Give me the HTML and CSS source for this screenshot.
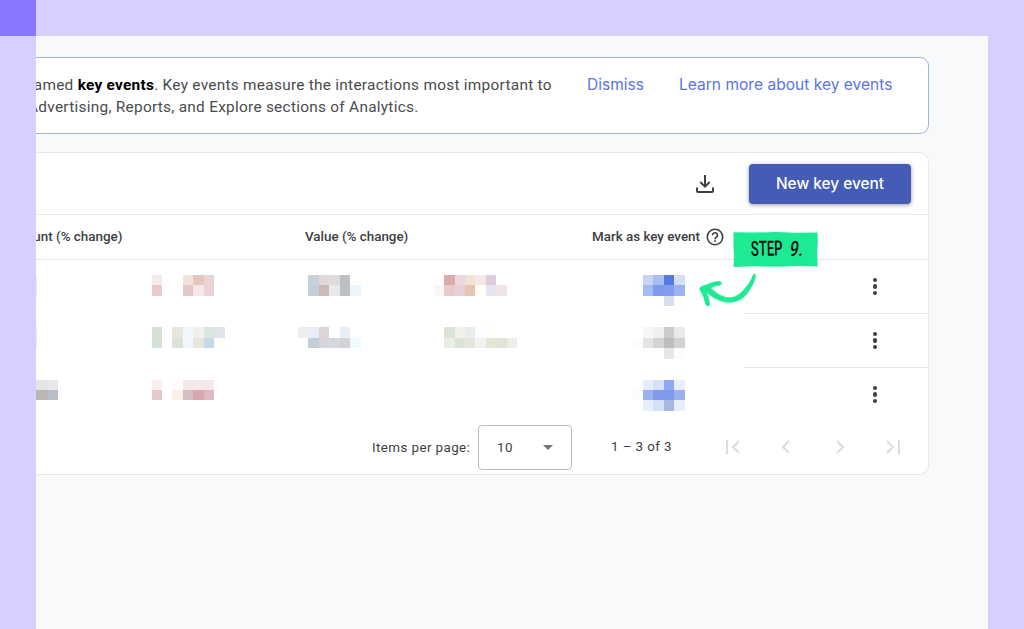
FILE: index.html
```html
<!DOCTYPE html>
<html lang="en">
<head>
  <meta charset="UTF-8" />
  <meta name="viewport" content="width=device-width, initial-scale=1.0" />
  <title>Key events</title>
  <link rel="stylesheet" href="styles.css">
</head>
<body>
  <div class="corner"></div>
  <main class="page">
    <section class="banner">
      <p class="banner-text">
        <span class="line line-one">named <b>key events</b>. Key events measure the interactions most important to</span>
        <span class="line line-two">Advertising, Reports, and Explore sections of Analytics.</span>
      </p>
      <a class="banner-link dismiss">Dismiss</a>
      <a class="banner-link learn">Learn more about key events</a>
    </section>

    <section class="card">
      <div class="toolbar">
        <svg class="download" viewBox="0 0 20 20" fill="none" stroke="#3c4043" stroke-width="2">
          <path d="M10 1v11M5.300 8l4.700 4.700L14.700 8M2 13.500V17q0 1 1 1h14q1 0 1-1v-3.500"/>
        </svg>
        <button class="new-event">New key event</button>
      </div>

      <div class="table-head">
        <span class="head-count">Count (% change)</span>
        <span class="head-value">Value (% change)</span>
        <span class="head-mark">Mark as key event</span>
        <svg class="help" viewBox="0 0 18 18" fill="none" stroke="#3c4043" stroke-width="1.6">
          <circle cx="9" cy="9" r="7.7"/>
          <path d="M6.500 7.300a2.500 2.400 0 1 1 3.900 1.900Q9 10.100 9 11.200"/>
          <path d="M9 12.300v1.700"/>
        </svg>
      </div>

      <div class="table-body">
        <div class="data" id="data"></div>
        <div class="actions">
          <div class="action"><i></i><i></i><i></i></div>
          <div class="action"><i></i><i></i><i></i></div>
          <div class="action"><i></i><i></i><i></i></div>
        </div>
      </div>

      <div class="paginator">
        <span class="per-page">Items per page:</span>
        <div class="select"><span>10</span><i class="caret"></i></div>
        <span class="range">1 – 3 of 3</span>
        <svg class="pager" viewBox="0 0 14 14"><path d="M1 0v14M13 1L7 7l6 6"/></svg>
        <svg class="pager" viewBox="0 0 14 14"><path d="M10 1L4 7l6 6"/></svg>
        <svg class="pager" viewBox="0 0 14 14"><path d="M4 1l6 6-6 6"/></svg>
        <svg class="pager" viewBox="0 0 14 14"><path d="M1 1l6 6-6 6M13 0v14"/></svg>
      </div>
    </section>
  </main>

  <svg class="tag" viewBox="0 0 86 36">
    <path fill="#1eea94" d="M.5 1.200l20 .4 22-.5 20 .6 22-.3.3 9-.6 10 .4 15-19-.3-20 .7-24-.5-21 .600.300-12-.400-10z"/>
  </svg>
  <div class="tag-text"><span class="word">STEP</span><span class="digit">9.</span></div>
  <svg class="arrow" viewBox="0 0 58 34" fill="#1eea94" stroke="#1eea94" stroke-width=".7">
    <path d="M54.500 1.500Q56.300.3 56.500 3.200C55 11 49 21 43.500 25.100C38 29.200 30 30.300 24.500 28.500C16 26.500 11 22 7.500 19L10 27.500Q11.500 32.500 9 33Q7 33.400 6 28.500C5 23 2 19 1 17C0 14 3 13 7 12C13 9.500 17 8 21 8.600Q24 9.700 21 12.100Q16 12.500 11.500 15C17 20 23 24.500 30 24.700C39 25.500 46 16 50.500 9.500Q53 5.500 54.500 1.500z"/>
  </svg>

  <script>
    // each cell: rows of hex colours, '-' leaves a block empty
    const rows = [
      [
        ['eeeeee', 'eeeeee'],
        ['f6ebeb - - f2e4da e6c7bd ebd4d3', 'e8cac8 - - e5c7c9 f5e8e9 e8d3d7'],
        ['- c8d1da e0d8d9 dfdcda bdc1c3 -', '- c3ced8 c9bbb8 e7e9ec bdc1c3 edf5fc'],
        ['- d9aca9 ecd7df f2e2d3 f5e8e8 dccddd -', 'fcf5f5 e9cbca e9cfd6 e6c5b7 fffdf4 e6e3f3 f1e4e8'],
        ['- c7d4f7 a8bef5 5579e5 d5dff8', 'fbfdff a5bbf4 7f9aec 839cec a0b1ef', '- - - d8dcec fdfdfb']
      ],
      [
        ['f0f0f3', 'eeeeee'],
        ['d6e1d6 - e6e7da f0f7fc f0f1ea d8e7e2 dfe6ea', 'd6e1d6 - dce2d8 f0f6fa e5e7dc c5dae7 fffef9'],
        ['ededed e8edf8 dfd5d9 - e8eff4', '- c4ced8 d6d5d9 d4d9e1 d3d3d5 effaff'],
        ['- dae3d5 f1f1ec e9edeb fbfdff fffefa', '- e8ede6 dae4d6 e5e6dc f2f2f3 e4e6d7 e2e4d5 eaefe7'],
        ['- f6f6f6 efefef cccccc e9e9e9', 'fefcfa e4e4e5 d3d3d4 bdbdbf d2d2d2', '- - - e6e6e6 fcfcfc']
      ],
      [
        ['e4e4e6 e9e9e9', 'bdb5b2 b8bec9'],
        ['f9efee - fffdfc f5e8e8 f5e8e9 f5e8e9', 'e5c8ca - fbf0e3 d4bfc5 d5a9ad dfb9c4'],
        [],
        [],
        ['- e5ecfb d5e0fa 8fa7ef e9eefb', 'f9fdff 9bb2f0 809bec 819bec 9dafee', '- e9eefc d7e0fa a9b7e3 e8eefb']
      ]
    ];

    const data = document.getElementById('data');
    rows.forEach((row, r) => {
      row.forEach((lines, c) => {
        const cell = document.createElement('div');
        cell.className = 'cell';
        if (c === 0) cell.classList.add(r < 2 ? 'sliver' : 'cut');
        lines.forEach(line => {
          const strip = document.createElement('div');
          strip.className = 'strip';
          line.split(' ').forEach(color => {
            const block = document.createElement('i');
            if (color !== '-') block.style.background = '#' + color;
            strip.appendChild(block);
          });
          cell.appendChild(strip);
        });
        data.appendChild(cell);
      });
    });
  </script>
</body>
</html>
```

FILE: styles.css
```css
* {
  box-sizing: border-box;
}

body {
  margin: 0;
  height: 629px;
  padding: 36px 36px 0;
  overflow: hidden;
  background: #d6cfff;
  color: #3c4043;
  font-family: Roboto, sans-serif;
}

.corner {
  position: absolute;
  left: 0;
  top: 0;
  width: 36px;
  height: 36px;
  background: #8878ff;
}

.page {
  height: 593px;
  padding-top: 21px;
  padding-right: 59px;
  overflow: hidden;
  background: #f8f9fb;
}

.banner {
  display: flex;
  height: 77px;
  padding-top: 16px;
  background: #fff;
  border: 1px solid #9db2ef;
  border-left: none;
  border-radius: 0 9px 9px 0;
}

.banner-text {
  width: 551px;
  margin: 0;
  overflow: hidden;
  font-size: 15.4px;
  line-height: 22.4px;
  letter-spacing: 0.27px;
  white-space: nowrap;
  color: #4a4b4d;
}

.banner-text b {
  color: #000;
}

.line {
  display: block;
}

.line-one {
  margin-left: -11px;
}

.line-two {
  margin-left: -8px;
}

.banner-link {
  font-family: Inter, sans-serif;
  font-size: 15.5px;
  line-height: 21px;
  letter-spacing: 0.03px;
  white-space: nowrap;
  color: #5b74e3;
}

.dismiss {
  width: 92px;
}

.card {
  margin-top: 18px;
  height: 323px;
  background: #fff;
  border: 1px solid #e6e8eb;
  border-left: none;
  border-radius: 0 10px 10px 0;
}

.toolbar {
  display: flex;
  justify-content: flex-end;
  align-items: center;
  height: 62px;
  padding-right: 17px;
  border-bottom: 1px solid #ebecee;
}

.download {
  width: 20px;
  height: 20px;
  margin-right: 34px;
}

.new-event {
  width: 162px;
  height: 40px;
  padding: 0;
  border: none;
  border-radius: 4px;
  background: #445cb6;
  box-shadow: 0 1px 4px rgba(0, 0, 0, 0.4);
  color: #fff;
  font-family: Inter, sans-serif;
  font-size: 15.4px;
  font-weight: 500;
}

.table-head {
  display: flex;
  align-items: center;
  height: 45px;
  border-bottom: 1px solid #e6e7e9;
  font-size: 13.4px;
  font-weight: 500;
  white-space: nowrap;
}

.table-head span {
  padding-bottom: 2px;
}

.head-count {
  width: 288px;
  margin-left: -19px;
}

.head-value {
  width: 287px;
}

.head-mark {
  width: 113.500px;
}

.help {
  width: 18px;
  height: 18px;
}

.table-body {
  display: flex;
  height: 161px;
}

.data {
  display: grid;
  grid-template-columns: 115.6px 146.3px 135.85px 198.85px 1fr;
  grid-template-rows: repeat(3, 52.25px);
  width: 708px;
  padding-top: 15px;
}

.strip {
  display: flex;
}

.strip i {
  flex: none;
  width: 10.45px;
  height: 10.45px;
}

.sliver {
  width: 1px;
  overflow: hidden;
}

.cut i:first-child {
  width: 11.5px;
}

.actions {
  flex: 1;
}

.action {
  display: flex;
  flex-direction: column;
  align-items: center;
  justify-content: center;
  gap: 2px;
  height: 54px;
  padding-left: 78px;
  border-bottom: 1px solid #e6e7e9;
}

.action:last-child {
  border-bottom-color: transparent;
}

.action i {
  width: 4.6px;
  height: 4.6px;
  border-radius: 50%;
  background: #3c4043;
}

.paginator {
  display: flex;
  align-items: center;
  height: 52px;
  padding-left: 336px;
  font-size: 13.4px;
  letter-spacing: 0.4px;
  white-space: nowrap;
}

.paginator > * {
  flex: none;
}

.per-page {
  width: 106px;
}

.select {
  display: flex;
  align-items: center;
  justify-content: space-between;
  width: 94px;
  height: 45px;
  margin-right: 39px;
  padding: 0 18px;
  border: 1px solid #bdbdbd;
  border-radius: 4px;
}

.caret {
  border: 5.5px solid transparent;
  border-top-color: #757575;
  border-bottom: none;
}

.range {
  width: 115px;
  padding-bottom: 1px;
}

.pager {
  width: 14px;
  height: 14px;
  margin-right: 39.4px;
  fill: none;
  stroke: #dcdcdc;
  stroke-width: 2;
}

.tag {
  position: absolute;
  left: 733px;
  top: 231px;
  width: 86px;
  height: 36px;
}

.tag-text {
  position: absolute;
  left: 751px;
  top: 237px;
  display: flex;
  color: #111;
  font-size: 21px;
  font-weight: 500;
  line-height: 25px;
}

.word {
  width: 39px;
  transform: rotate(-1deg) scaleX(0.62);
  transform-origin: left center;
}

.digit {
  transform: skewX(-8deg) scaleX(0.75);
  transform-origin: left center;
}

.arrow {
  position: absolute;
  left: 699px;
  top: 273px;
  width: 58px;
  height: 34px;
}
```
